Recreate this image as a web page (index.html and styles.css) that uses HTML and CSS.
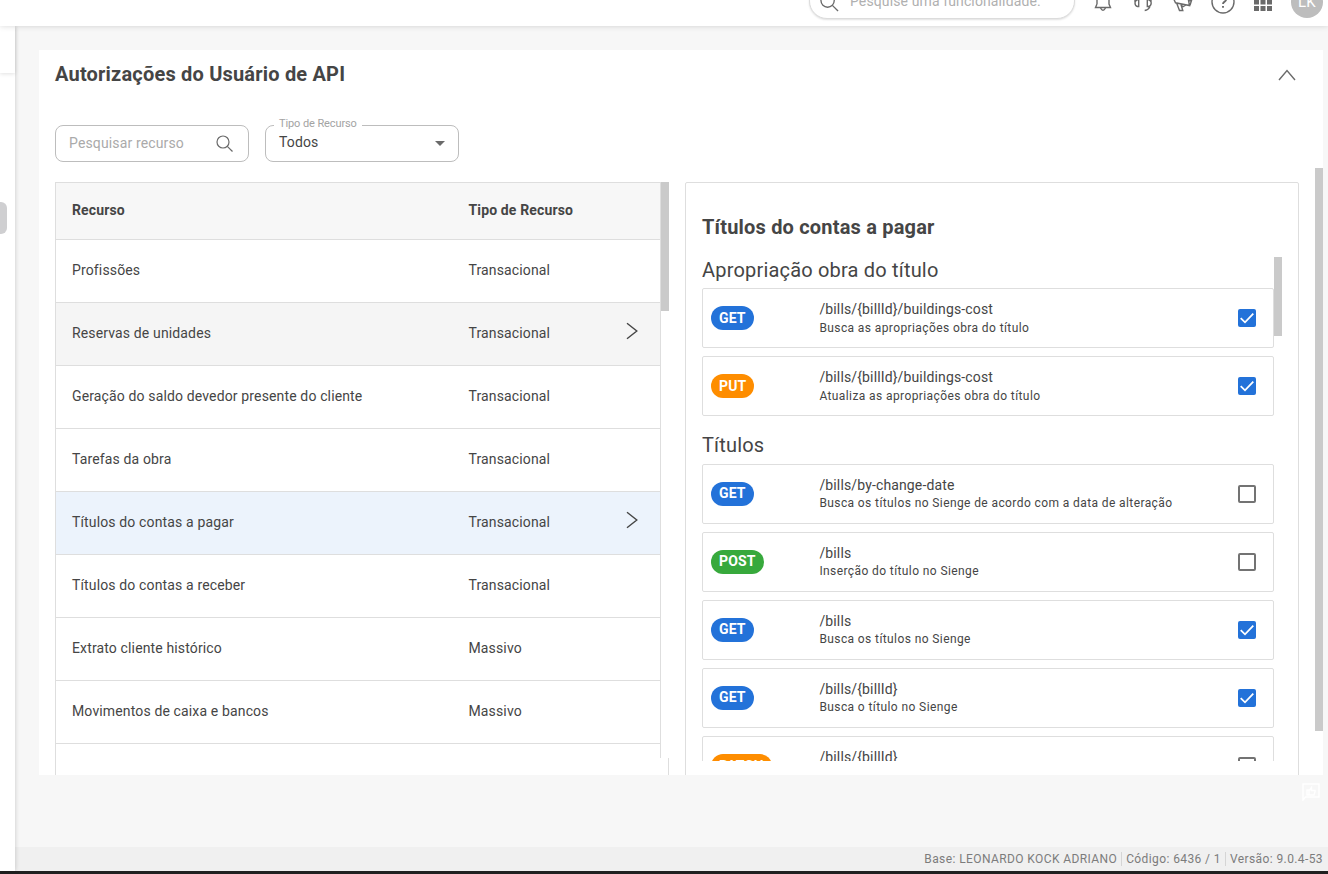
FILE: index.html
```html
<!DOCTYPE html>
<html lang="pt-BR">
<head>
<meta charset="utf-8">
<title>Autorizações do Usuário de API</title>
<link rel="stylesheet" href="styles.css">
</head>
<body>
<svg class="defs" width="0" height="0" aria-hidden="true">
  <symbol id="search" viewBox="0 0 20 20"><circle cx="8" cy="8" r="6"/><path d="M12.300 12.300 17.500 17.500"/></symbol>
  <symbol id="chevron" viewBox="0 0 12 18"><path d="M1 1.2 10.8 9 1 16.8"/></symbol>
  <symbol id="tick" viewBox="0 0 18 18"><path d="M2.700 9.200 7 13.300 15.300 4.700"/></symbol>
</svg>
<div class="app">
  <header class="topbar">
    <div class="global-search">
      <svg class="gs-icon" viewBox="0 0 20 20"><circle cx="8" cy="8" r="7"/><path d="M13 13 19 19"/></svg>
      <span>Pesquise uma funcionalidade.</span>
    </div>
    <nav class="tools">
      <svg class="tool" viewBox="0 0 24 24"><path d="M6 14V9a6 6 0 0 1 12 0v5l1.500 3.500h-15L6 14M9.500 18q2.500 4.500 5 0"/></svg>
      <svg class="tool" viewBox="0 0 24 24"><path d="M4 12v-2a8 8 0 0 1 16 0v2M7.700 9.500v7H6.500Q4 16 4 13t3.700-3.500M16.300 9.500v7h1.200q2.700-.5 2.700-3.500t-3.900-3.500M19 16.500q-1.500 3.500-5.300 4"/></svg>
      <svg class="tool" viewBox="0 0 24 24"><path d="M3 9.500 4.500 12.800 18.500 15.500 16.500 5zM5.700 13.200 8.500 20.500h3.300L9.800 14M10.500 14.500l1 2.500 3.500-2M17.500 11l3-.5-1.500 4.800"/></svg>
      <svg class="tool" viewBox="0 0 24 24"><circle cx="12" cy="12" r="11"/><path class="thick" d="M8.800 9q.2-3.200 3.200-3.200T15.200 9q0 1.600-1.600 2.600T12 14M12 16v1.800"/></svg>
      <svg class="tool grid" viewBox="0 0 24 24"><path d="M3 3h5v5H3zM9.500 3h5v5h-5zM16 3h5v5h-5zM3 9.500h5v5H3zM9.500 9.500h5v5h-5zM16 9.500h5v5h-5zM3 16h5v5H3zM9.500 16h5v5h-5zM16 16h5v5h-5z"/></svg>
    </nav>
    <div class="avatar">LK</div>
  </header>
  <div class="body">
    <aside class="sidebar"><div class="side-head"></div><div class="handle"></div></aside>
    <main class="main">
      <section class="panel">
        <div class="panel-head">
          <h1>Autorizações do Usuário de API</h1>
          <svg class="collapse" viewBox="0 0 18 12"><path d="M1 11 9 1.500 17 11"/></svg>
        </div>
        <div class="filters">
          <div class="field"><span class="placeholder">Pesquisar recurso</span><svg class="field-icon"><use href="#search"/></svg></div>
          <div class="field select"><span class="label">Tipo de Recurso</span><span class="value">Todos</span><i class="caret"></i></div>
        </div>
        <div class="columns">
          <div class="table-wrap">
            <div class="table">
              <div class="row head"><span>Recurso</span><span>Tipo de Recurso</span></div>
              <div class="row"><span>Profissões</span><span>Transacional</span></div>
              <div class="row hover"><span>Reservas de unidades</span><span>Transacional</span><svg class="chev"><use href="#chevron"/></svg></div>
              <div class="row"><span>Geração do saldo devedor presente do cliente</span><span>Transacional</span></div>
              <div class="row"><span>Tarefas da obra</span><span>Transacional</span></div>
              <div class="row active"><span>Títulos do contas a pagar</span><span>Transacional</span><svg class="chev"><use href="#chevron"/></svg></div>
              <div class="row"><span>Títulos do contas a receber</span><span>Transacional</span></div>
              <div class="row"><span>Extrato cliente histórico</span><span>Massivo</span></div>
              <div class="row"><span>Movimentos de caixa e bancos</span><span>Massivo</span></div>
            </div>
            <div class="track"><div class="thumb"></div></div>
            <div class="table-foot"></div>
          </div>
          <div class="detail">
            <h2>Títulos do contas a pagar</h2>
            <div class="scroll">
              <div class="list">
                <h3>Apropriação obra do título</h3>
                <div class="card low"><div class="verb"><b class="get">GET</b></div><div class="info"><p>/bills/{billId}/buildings-cost</p><small>Busca as apropriações obra do título</small></div><svg class="check on"><use href="#tick"/></svg></div>
                <div class="card low"><div class="verb"><b class="put">PUT</b></div><div class="info"><p>/bills/{billId}/buildings-cost</p><small>Atualiza as apropriações obra do título</small></div><svg class="check on"><use href="#tick"/></svg></div>
                <h3 class="second">Títulos</h3>
                <div class="card"><div class="verb"><b class="get">GET</b></div><div class="info"><p>/bills/by-change-date</p><small>Busca os títulos no Sienge de acordo com a data de alteração</small></div><i class="check off"></i></div>
                <div class="card"><div class="verb"><b class="post">POST</b></div><div class="info"><p>/bills</p><small>Inserção do título no Sienge</small></div><i class="check off"></i></div>
                <div class="card"><div class="verb"><b class="get">GET</b></div><div class="info"><p>/bills</p><small>Busca os títulos no Sienge</small></div><svg class="check on"><use href="#tick"/></svg></div>
                <div class="card"><div class="verb"><b class="get">GET</b></div><div class="info"><p>/bills/{billId}</p><small>Busca o título no Sienge</small></div><svg class="check on"><use href="#tick"/></svg></div>
                <div class="card low"><div class="verb"><b class="put">PATCH</b></div><div class="info"><p>/bills/{billId}</p></div><i class="check off"></i></div>
              </div>
              <div class="list-thumb"></div>
            </div>
          </div>
        </div>
        <div class="panel-thumb"></div>
      </section>
      <svg class="feedback" viewBox="0 0 18 18"><path d="M1 17V1h16v13H3.500z"/><path d="M5 7h2v5H5zM7 8l2.500-3.500v3H13V9l-1 3H7"/></svg>
      <footer class="status"><span>Base: LEONARDO KOCK ADRIANO</span><span>Código: 6436 / 1</span><span>Versão: 9.0.4-53</span></footer>
    </main>
  </div>
  <div class="edge"></div>
</div>
</body>
</html>
```
FILE: styles.css
```css
* { box-sizing: border-box; }
body { margin: 0; font-family: Roboto, "Liberation Sans", sans-serif; color: #454545; font-size: 14px; letter-spacing: .14px; }
h1, h2, h3, p { margin: 0; }
svg { fill: none; stroke: #6a6a6a; stroke-width: 1.4; }
.defs { position: absolute; }
.app { height: 874px; display: flex; flex-direction: column; overflow: hidden; background: #f7f7f7; }

.topbar { flex: none; position: relative; z-index: 3; height: 26px; background: #fff; box-shadow: 0 0 6px rgba(0,0,0,.16); display: flex; align-items: flex-end; justify-content: flex-end; padding: 0 5px 8px 0; }
.global-search { width: 266px; height: 36px; flex: none; margin-bottom: -1px; border-radius: 18px; background: #fff; border: 1px solid #dcdcdc; box-shadow: 0 1px 2px rgba(0,0,0,.12); display: flex; align-items: center; gap: 11px; padding-left: 10px; color: #b0b0b0; letter-spacing: .12px; }
.gs-icon { width: 19px; height: 19px; margin-top: 3px; }
.tools { display: flex; gap: 16px; margin: 0 16px 4px; }
.tool { width: 24px; height: 24px; flex: none; }
.tool .thick { stroke-width: 1.900; }
.tool.grid { fill: #6a6a6a; stroke: none; }
.avatar { width: 32px; height: 32px; border-radius: 50%; background: #bdbdbd; color: #fff; text-align: center; line-height: 32px; font-size: 15px; }

.body { flex: 1; min-height: 0; display: flex; }
.sidebar { width: 15px; background: #fff; box-shadow: 0 0 5px rgba(0,0,0,.2); z-index: 2; }
.side-head { height: 47px; box-shadow: 0 1px 4px rgba(0,0,0,.12); }
.handle { width: 7px; height: 32px; margin-top: 129px; background: #cfcfd1; border-radius: 0 6px 6px 0; }
.main { flex: 1; min-width: 0; display: flex; flex-direction: column; padding-top: 24px; }

.panel { position: relative; flex: none; width: 1284px; height: 725px; margin-left: 24px; background: #fff; padding: 0 24px 0 16px; overflow: hidden; display: flex; flex-direction: column; }
.panel-head { height: 75px; flex: none; display: flex; justify-content: space-between; padding-top: 12px; }
h1, h2 { font-size: 20px; line-height: 24px; font-weight: 700; letter-spacing: .19px; }
.collapse { width: 18px; height: 12px; margin: 7px 3px 0 0; }
.filters { display: flex; gap: 16px; height: 57px; flex: none; }
.field { position: relative; width: 194px; height: 37px; border: 1px solid #bdbdbd; border-radius: 8px; padding: 0 13px; display: flex; align-items: center; justify-content: space-between; }
.placeholder { color: #aaa; margin-top: -2px; }
.field-icon { width: 20px; height: 20px; stroke-width: 1.2; }
.label { position: absolute; left: 8px; top: -9px; padding: 0 5px; background: #fff; color: #a3a3a3; font-size: 11px; line-height: 14px; letter-spacing: -.1px; }
.value { margin-top: -3px; }
.caret { border: 5px solid transparent; border-top-color: #6a6a6a; border-bottom: 0; }

.columns { flex: 1; min-height: 0; display: flex; gap: 16px; }
.table-wrap { width: 614px; display: grid; grid-template-columns: 606px 8px; grid-template-rows: 576px 1fr; }
.table { overflow: hidden; border: 1px solid #dedede; border-bottom: 0; display: flex; flex-direction: column; }
.row { height: 63px; flex: none; display: grid; grid-template-columns: 396.500px 157px 1fr; padding-left: 16px; align-items: center; border-bottom: 1px solid #dedede; }
.row.head { height: 57px; background: #f7f7f7; font-weight: 700; }
.row.hover { background: #f5f5f5; }
.row.active { background: #ecf3fc; }
.row span { margin-top: -3px; }
.chev { width: 12px; height: 18px; margin-top: -7px; stroke: #454545; }
.thumb { height: 129px; background: #cacaca; }
.table-foot { grid-column: 1 / 3; border: solid #dedede; border-width: 0 1px; }

.detail { width: 614px; height: 640px; border: 1px solid #dedede; border-radius: 2px; padding: 32px 16px 0; }
.scroll { display: flex; height: 504px; margin-top: 18px; overflow: hidden; }
.list { width: 572px; }
h3 { font-size: 20px; font-weight: 400; line-height: 26px; height: 31px; letter-spacing: .19px; }
h3.second { margin-top: 16px; height: 32px; }
.card { height: 60px; border: 1px solid #dedede; border-radius: 2px; margin-bottom: 8px; padding: 0 17px 0 8px; display: flex; align-items: flex-start; }
.verb { width: 108.400px; padding-top: 17px; }
.verb b { display: block; width: fit-content; height: 24px; line-height: 23px; border-radius: 12px; padding: 0 8px; color: #fff; letter-spacing: .15px; }
.low .verb b { line-height: 24px; }
.get { background: #2372d9; }
.put { background: #fe8d00; }
.post { background: #37a93c; }
.info { flex: 1; padding-top: 10px; }
.info p { line-height: 20px; }
.info small { display: block; font-size: 12px; line-height: 16px; letter-spacing: .4px; }
.low small { padding-top: 1px; }
.check { width: 18px; height: 18px; flex: none; margin-top: 20px; border-radius: 2px; }
.check.off { border: 2px solid #737373; }
.check.on { background: #2372d9; stroke: #fff; stroke-width: 1.800; }
.list-thumb { width: 8px; height: 79px; background: #cacaca; }
.panel-thumb { position: absolute; right: 0; top: 118px; width: 8px; height: 563px; background: #cacaca; }

.feedback { width: 18px; height: 18px; flex: none; margin: 8px 8px 0 auto; stroke: #fff; }
.status { margin-top: auto; height: 24px; background: #f0f0f0; display: flex; justify-content: flex-end; align-items: center; padding-right: 5px; color: #7c7c7c; font-size: 12px; letter-spacing: .4px; }
.status span + span { border-left: 1px solid #d5d5d5; margin-left: 4px; padding-left: 4px; }
.edge { height: 3px; background: #202020; flex: none; }
```
